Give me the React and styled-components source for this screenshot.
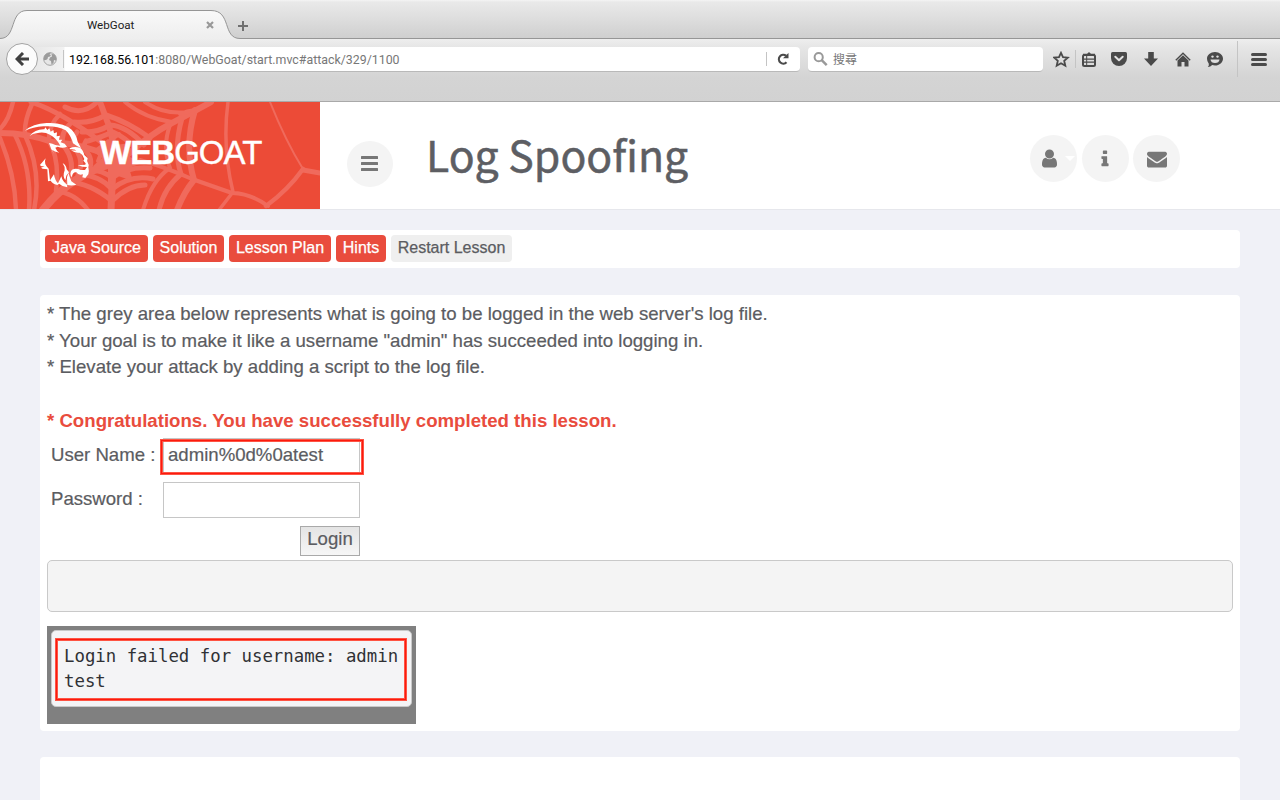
import React from "react";
import styled, { createGlobalStyle } from "styled-components";

const sans = `"Liberation Sans", Arial, sans-serif`;
const ui = `Roboto, "Noto Sans CJK TC", sans-serif`;

const Global = createGlobalStyle`
  * { box-sizing: border-box; }
  html, body, #root { height: 100%; margin: 0; }
  body { overflow: hidden; background: #f0f1f7; font-family: ${sans}; color: #5b5c61; }
  svg { display: block; flex: none; }
`;

const Page = styled.div`
  height: 800px;
  overflow: hidden;
  display: flex;
  flex-direction: column;
`;

/* ---------- browser window ---------- */

const TabStrip = styled.div`
  height: 39px;
  flex: none;
  display: flex;
  position: relative;
  background: linear-gradient(#f4f4f4 0, #e9e9e9 2px, #dedede 18px, #cfcfcf 38px);
`;

const TabOutline = styled.svg`
  position: absolute;
  left: 0;
  top: 0;
`;

const Tab = styled.div`
  position: relative;
  width: 230px;
  height: 39px;
  padding: 11px 16px 0 87px;
  display: flex;
  align-items: center;
  justify-content: space-between;
  font: 11.6px/16px ${ui};
  color: #222;
`;

const NewTab = styled.div`
  position: relative;
  padding: 21px 0 0 8px;
`;

const NavBar = styled.div`
  height: 63px;
  flex: none;
  display: flex;
  align-items: flex-start;
  padding: 4px 12px 0 6px;
  border-bottom: 1px solid #a9a9a9;
  background: linear-gradient(#eeeeee 0, #e6e6e6 8px, #d4d4d4 38px, #d2d2d2 100%);
`;

const BackButton = styled.div`
  width: 32px;
  height: 32px;
  flex: none;
  z-index: 1;
  border: 1px solid #a3a3a3;
  border-radius: 50%;
  background: #fbfbfb;
  display: grid;
  place-items: center;
`;

const AddressField = styled.div`
  width: 776px;
  height: 25px;
  margin: 4px 8px 0 -14px;
  padding-left: 19px;
  display: flex;
  align-items: center;
  background: linear-gradient(90deg, #e4e4e4 0, #f2f2f2 40px, #fff 41px);
  border-bottom: 1px solid #b9b9b9;
  border-radius: 0 4px 4px 0;
  font: 12.37px/22px ${ui};
  color: #777;
`;

const Rule = styled.i`
  width: 1px;
  height: ${(p) => p.$h}px;
  margin: ${(p) => p.$m || "0"};
  background: #c4c4c4;
  flex: none;
`;

const Url = styled.span`
  flex: 1;
  padding-top: 2px;
  white-space: nowrap;
  b { font-weight: 400; color: #000; }
`;

const SearchField = styled.div`
  width: 235px;
  height: 25px;
  margin-top: 4px;
  padding-left: 5px;
  display: flex;
  align-items: center;
  gap: 5px;
  background: #fff;
  border-bottom: 1px solid #b9b9b9;
  border-radius: 4px;
  font: 12px/24px "Noto Sans CJK TC", sans-serif;
  color: #777;
`;

const ToolIcons = styled.div`
  flex: 1;
  height: 32px;
  margin-left: 9px;
  display: flex;
  align-items: center;
`;

const ToolIcon = styled.span`
  width: 18px;
  margin-right: ${(p) => p.$gap}px;
  display: grid;
  place-items: center;
  flex: none;
`;

/* ---------- page header ---------- */

const Header = styled.header`
  height: 108px;
  flex: none;
  display: flex;
  background: #fff;
  border-bottom: 1px solid #e6e7ec;
`;

const Brand = styled.div`
  width: 320px;
  height: 107px;
  position: relative;
  background: #ec4b37;
  overflow: hidden;
`;

const BrandArt = styled.svg`
  position: absolute;
  inset: 0;
`;

const BrandName = styled.div`
  position: relative;
  padding: 31px 0 0 100px;
  font-size: 33px;
  line-height: 40px;
  letter-spacing: -0.95px;
  color: #fff;
  white-space: nowrap;
  -webkit-text-stroke: 0.4px #fff;
  b { font-weight: 700; }
`;

const RoundButton = styled.div`
  width: 47px;
  height: 47px;
  border-radius: 50%;
  background: #f4f4f4;
  display: flex;
  align-items: center;
  justify-content: center;
  flex: none;
`;

const MenuButton = styled(RoundButton)`
  width: 46px;
  height: 46px;
  margin: 39px 0 0 27px;
  padding: 0 1px 1px 0;
`;

const Title = styled.h1`
  flex: 1;
  margin: 19px 0 0 33px;
  font: 400 42.8px/64px "Noto Sans CJK SC", sans-serif;
  color: #5d5e63;
  white-space: nowrap;
  -webkit-text-stroke: 0.5px #5d5e63;
`;

const HeaderActions = styled.div`
  display: flex;
  gap: 4.5px;
  margin: 33px 100px 0 0;
`;

const Caret = styled.i`
  border: 5px solid transparent;
  border-top-color: #fff;
  border-bottom: 0;
  margin: 0 -6px 0 5px;
`;

/* ---------- lesson ---------- */

const Main = styled.main`
  padding: 20px 40px 0;
  display: flex;
  flex-direction: column;
`;

const Panel = styled.section`
  background: #fff;
  border-radius: 4px;
  height: ${(p) => p.$h}px;
  margin-bottom: ${(p) => p.$gap || 0}px;
  padding: ${(p) => p.$pad || "0"};
  flex: none;
`;

const Buttons = styled.div`
  display: flex;
  gap: 5px;
`;

const Button = styled.div`
  width: ${(p) => p.$w}px;
  height: 27px;
  border-radius: 4px;
  background: ${(p) => (p.$plain ? "#efefef" : "#e94c3d")};
  color: ${(p) => (p.$plain ? "#5b5c61" : "#fff")};
  font-size: 16px;
  line-height: 25px;
  text-align: center;
  white-space: nowrap;
  -webkit-text-stroke: 0.25px currentColor;
`;

const Line = styled.p`
  margin: 0;
  height: 26.7px;
  font-size: 18.64px;
  line-height: 26.7px;
  white-space: nowrap;
  -webkit-text-stroke: 0.2px currentColor;
`;

const Success = styled(Line)`
  margin-top: 26.7px;
  font-weight: 700;
  color: #e94c3d;
  -webkit-text-stroke: 0;
`;

const Form = styled.div`
  width: 313px;
  padding: 4px 0 0 4px;
  display: grid;
  grid-template-columns: 112px 197px;
  row-gap: 8px;
  font-size: 18.6px;
  -webkit-text-stroke: 0.2px currentColor;
`;

const Label = styled.span`
  line-height: 33px;
  white-space: nowrap;
`;

const Field = styled.div`
  position: relative;
  height: 36px;
  padding-left: 4px;
  border: 1px solid #c6c6c6;
  background: #fff;
  line-height: 32px;
`;

/* bright centre line with a softer line on either side */
const Highlight = styled.span`
  position: absolute;
  inset: ${(p) => p.$inset};
  border: 1px solid #fb1a0e;
  box-shadow: 0 0 0 1px #fe5444, inset 0 0 0 1px #fe5444;
`;

const LoginButton = styled.div`
  grid-column: 2;
  justify-self: end;
  width: 60px;
  height: 30px;
  border: 1px solid #a9a9a9;
  background: linear-gradient(#e4e4e4, #f6f6f6);
  line-height: 24px;
  text-align: center;
`;

const EmptyWell = styled.div`
  height: 52px;
  margin-top: 4px;
  border: 1px solid #c9c9c9;
  border-radius: 5px;
  background: #f4f4f4;
`;

const LogArea = styled.div`
  width: 369px;
  height: 98px;
  margin-top: 14px;
  padding: 4px;
  background: #808080;
`;

const Log = styled.pre`
  position: relative;
  height: 77px;
  margin: 0;
  padding: 13px 12px;
  border: 1px solid #c9c9c9;
  border-radius: 5px;
  background: #f4f4f6;
  color: #303135;
  font: 17.35px/25px "DejaVu Sans Mono", monospace;
`;

/* ---------- drawings ---------- */

const dark = "#4a4a4a";

const TabShape = () => (
  <TabOutline width="1280" height="39" viewBox="0 0 1280 39">
    <defs>
      <linearGradient id="tab" x1="0" y1="0" x2="0" y2="1">
        <stop offset="0" stopColor="#f9f9f9" />
        <stop offset="1" stopColor="#eeeeee" />
      </linearGradient>
    </defs>
    <path d="M0 38.5C17 38.5 9 10.5 27 10.5H211C232 10.5 222 38.5 240 38.5V39H0Z" fill="url(#tab)" />
    <path d="M0 38.5C17 38.5 9 10.5 27 10.5H211C232 10.5 222 38.5 240 38.5H1280" fill="none" stroke="#969696" />
  </TabOutline>
);

const CloseIcon = () => (
  <svg width="8" height="8" viewBox="0 0 8 8">
    <path d="M1 1l6 6M7 1L1 7" stroke="#999" strokeWidth="2.2" />
  </svg>
);

const PlusIcon = () => (
  <svg width="10" height="10" viewBox="0 0 10 10">
    <path d="M5 0v10M0 5h10" stroke="#707070" strokeWidth="2" />
  </svg>
);

const BackIcon = () => (
  <svg width="14" height="14" viewBox="0 0 14 14">
    <path d="M8 1L2 7l6 6M2 7h12" fill="none" stroke="#404040" strokeWidth="3" />
  </svg>
);

const GlobeIcon = () => (
  <svg width="14" height="14" viewBox="0 0 14 14">
    <circle cx="7" cy="7" r="6.3" fill="#e6e6e6" stroke="#a2a2a2" />
    <path d="M1 8C0 3 4 0 8 .8L6.500 2.500l1.500.5-1 1.500-2 .5L4.500 7 3 8zM8.500 2l2.500.2c2 1.500 2.700 4 2.200 6.300l-2.200-.5-.5 3-2 1.500-.5-3.500L6 8l1-2.500L9 4.500z" fill="#9b9b9b" />
  </svg>
);

const ReloadIcon = () => (
  <svg width="12" height="12" viewBox="0 0 12 12">
    <path d="M9.500 9.200A4.400 4.400 0 1 1 9 2.700" fill="none" stroke={dark} strokeWidth="2.200" />
    <path d="M11.500 0v5.200H6z" fill={dark} />
  </svg>
);

const SearchIcon = () => (
  <svg width="15" height="14" viewBox="0 0 15 14">
    <circle cx="5.700" cy="5.200" r="4.100" fill="none" stroke="#999" strokeWidth="2" />
    <path d="M8.700 8.200l5 5" stroke="#999" strokeWidth="2.400" />
  </svg>
);

const StarIcon = () => (
  <svg width="17" height="17" viewBox="0 0 17 17">
    <path d="M8 1.800l2 4.300 4.800.5-3.600 3.200 1.100 4.900L8 12.200l-4.300 2.500 1.100-4.900-3.600-3.200 4.800-.5z" fill="none" stroke={dark} strokeWidth="1.800" />
  </svg>
);

const ListIcon = () => (
  <svg width="14" height="15" viewBox="0 0 14 15">
    <path d="M4.500 2.500L7 0l2.500 2.500" fill={dark} />
    <rect x="1" y="3" width="12" height="11" rx="1.500" fill="none" stroke={dark} strokeWidth="2" />
    <path d="M1 2.500h12M2 7.200h10M2 10.200h10" stroke={dark} strokeWidth="1.300" />
    <path d="M4.700 4v10" stroke={dark} strokeWidth="1" />
  </svg>
);

const PocketIcon = () => (
  <svg width="16" height="14" viewBox="0 0 16 14">
    <path d="M1.500 0h13Q16 0 16 1.500V6a8 8 0 0 1-16 0V1.500Q0 0 1.500 0z" fill={dark} />
    <path d="M4.300 4.700L8 8.200l3.700-3.500" fill="none" stroke="#e2e2e2" strokeWidth="2" strokeLinecap="round" strokeLinejoin="round" />
  </svg>
);

const DownloadIcon = () => (
  <svg width="14" height="14" viewBox="0 0 14 14">
    <path d="M4.200 0h5.600v6.500H14L7 14 0 6.500h4.200z" fill={dark} />
  </svg>
);

const HomeIcon = () => (
  <svg width="16" height="15" viewBox="0 0 16 15">
    <path d="M.8 8.200L8 1.300l7.200 6.900" fill="none" stroke={dark} strokeWidth="1.400" />
    <path d="M2.500 8.500L8 3.300l5.500 5.200V14.500h-4V10h-3v4.500h-4z" fill={dark} />
  </svg>
);

const ChatIcon = () => (
  <svg width="16" height="15" viewBox="0 0 16 15">
    <path d="M8 0c4.500 0 8 3 8 6.700s-3.500 6.800-8 6.800q-1.500 0-2.800-.4Q3.500 15 .8 15q1.500-1.500 1-3.300Q0 9.500 0 6.700C0 3 3.500 0 8 0z" fill={dark} />
    <path d="M3.500 7.500h9Q12 11 8 11T3.500 7.500z" fill="#dedede" />
    <circle cx="5.500" cy="4.600" r="1.200" fill="#dedede" />
    <circle cx="10.500" cy="4.600" r="1.200" fill="#dedede" />
  </svg>
);

const BarsIcon = ({ w, h, color, t, r }) => (
  <svg width={w} height={h}>
    <rect width={w} height={t} rx={r} fill={color} />
    <rect y={(h - t) / 2} width={w} height={t} rx={r} fill={color} />
    <rect y={h - t} width={w} height={t} rx={r} fill={color} />
  </svg>
);

const Glyph = ({ d, size }) => (
  <svg width={size} height={size} viewBox="0 0 1792 1792">
    <path d={d} fill="#777" />
  </svg>
);

const userPath =
  "M1536 1399q0 109-62.5 187t-150.5 78h-854q-88 0-150.5-78t-62.5-187q0-85 8.5-160.5t31.5-152 58.5-131 94-89 134.5-34.5q131 128 313 128t313-128q76 0 134.5 34.5t94 89 58.5 131 31.5 152 8.5 160.5zm-256-887q0 159-112.5 271.5t-271.5 112.5-271.5-112.5-112.5-271.5 112.5-271.5 271.5-112.5 271.5 112.5 112.5 271.5z";
const infoPath =
  "M1216 1344v128q0 26-19 45t-45 19h-512q-26 0-45-19t-19-45v-128q0-26 19-45t45-19h64v-384h-64q-26 0-45-19t-19-45v-128q0-26 19-45t45-19h384q26 0 45 19t19 45v576h64q26 0 45 19t19 45zm-128-1152v192q0 26-19 45t-45 19h-256q-26 0-45-19t-19-45v-192q0-26 19-45t45-19h256q26 0 45 19t19 45z";
const mailPath =
  "M1792 710v794q0 66-47 113t-113 47h-1472q-66 0-113-47t-47-113v-794q44 49 101 87 362 246 497 345 57 42 92.5 65.5t94.5 48 110 24.5h2q51 0 110-24.5t94.5-48 92.5-65.5q170-123 498-345 57-39 100-87zm0-294q0 79-49 151t-122 123q-376 261-468 325-10 7-42.5 31t-54 38.5-52 32.5-57.5 27-50 9h-2q-23 0-50-9t-57.5-27-52-32.5-54-38.5-42.5-31q-91-64-262-182.5t-205-142.5q-62-42-117-115.5t-55-136.5q0-78 41.5-130t118.5-52h1472q65 0 112.5 47t47.500 113z";

const WebAndGoat = () => (
  <BrandArt width="320" height="108" viewBox="0 0 320 108">
    <g fill="none" stroke="#f06a5c" strokeLinecap="round" strokeLinejoin="round">
      {/* outer threads */}
      <path d="M270 0Q286 40 303 67" strokeWidth="2" />
      <path d="M303 68L320 71" strokeWidth="5" />
      <path d="M303 67Q288 88 266 104" strokeWidth="4.500" />
      <path d="M268 104Q250 91 232 91Q212 84 192 77Q165 65 140 58" strokeWidth="4" />
      <path d="M228 0Q222 45 233 90L219 108" strokeWidth="3.500" />
      <path d="M195 8Q184 44 194 78Q184 90 177 108" strokeWidth="6" />
      <path d="M182 16Q173 48 181 72Q164 86 159 108" strokeWidth="5" />
      <path d="M170 23Q162 45 170 66Q152 78 143 108" strokeWidth="4" />
      {/* spokes */}
      <path d="M211 0Q191 11 172 21Q148 33 123 57" strokeWidth="6" />
      <path d="M100 0L109 24 118 60" strokeWidth="6" />
      <path d="M31 0Q67 12 115 51" strokeWidth="5" />
      <path d="M0 31Q28 31 52 40Q85 42 114 56" strokeWidth="6" />
      <path d="M43 108Q68 75 113 61" strokeWidth="8" />
      <path d="M111 108L113 63" strokeWidth="7" />
      {/* rings */}
      <path d="M13 0Q9 18 0 27M32 2Q24 19 25 33Q42 70 34 108M0 36Q15 72 16 108M15 33Q32 67 29 108M60 12Q48 24 49 39Q60 58 56 89Q75 91 88 108" strokeWidth="4.500" />
      <path d="M65 5Q82 14 96 1M74 20Q90 22 106 13Q128 20 150 36M82 30Q97 31 110 23Q127 24 144 43M88 39Q102 35 113 30Q125 35 137 48" strokeWidth="5" />
      <path d="M70 22Q60 31 63 43Q77 60 68 80Q90 81 112 99Q128 83 145 83M77 30Q71 38 74 45Q85 58 78 73Q98 72 112 87Q131 72 153 77M86 39Q83 44 85 48Q94 57 89 68Q103 68 112 76Q128 64 150 66" strokeWidth="5" />
      <path d="M125 0Q144 16 172 20M145 0Q164 13 188 10M180 12Q187 9 195 8" strokeWidth="4" />
      <path d="M119 32Q103 42 98 59M130 42Q115 52 113 75" strokeWidth="4" />
    </g>
    <path d="M92 49L108 37 116 43 130 41 128 54 142 61 129 66 133 79 118 74 108 82 108 64 93 64 102 56z" fill="#f06a5c" />
    {/* goat head */}
    <g transform="translate(15 11) scale(.33333)" fill="#fff">
      <path d="M30 53Q53 32 95 30Q145 27 170 50Q185 66 188 86L198 105Q184 99 174 91Q168 68 152 52Q125 37 85 40Q54 42 30 53Z" />
      <path d="M44 69Q60 48 88 49L91 43 97 51 103 46 107 56 115 51 117 61 126 58 125 70 135 68 132 80 142 80 137 88 149 92 156 101Q143 107 128 101L121 104Q124 113 133 119Q118 116 111 110L118 124Q108 111 102 90Q113 91 121 96L136 98Q124 75 105 65Q85 54 65 61Q53 62 44 69Z" />
      <path d="M164 106Q177 99 195 104Q204 110 208 126L218 136Q215 145 219 151Q223 156 220 163Q223 174 220 184L211 195 202 193 204 184Q190 188 184 178Q173 176 170 193Q162 181 171 170Q183 164 197 171L210 171 216 162 203 161 188 157 211 155 212 151 205 143 208 138 202 126 194 119Q179 121 168 112L184 113Q180 108 164 109Z" />
      <path d="M92 136Q85 153 101 167L105 202 117 184Q120 203 129 211L139 190Q142 205 157 216L156 193 160 180 169 205 184 215Q173 219 156 216L157 223Q141 220 132 212L127 216Q111 211 107 203L99 205 97 169 83 167 78 164 89 160Q67 160 80 150Z" />
      <path d="M143 151Q153 155 155 169L162 178 154 188 151 202Q142 190 149 172Q151 162 143 151Z" />
    </g>
  </BrandArt>
);

const tools = [
  [PocketIcon, 14],
  [DownloadIcon, 14],
  [HomeIcon, 14],
  [ChatIcon, 13],
];

const lessonButtons = [
  ["Java Source", 103],
  ["Solution", 71],
  ["Lesson Plan", 102],
  ["Hints", 50],
];

export default function App() {
  return (
    <Page>
      <Global />
      <TabStrip>
        <TabShape />
        <Tab>
          WebGoat
          <CloseIcon />
        </Tab>
        <NewTab><PlusIcon /></NewTab>
      </TabStrip>
      <NavBar>
        <BackButton><BackIcon /></BackButton>
        <AddressField>
          <GlobeIcon />
          <Rule $h={18} $m="0 5px 0 6px" />
          <Url><b>192.168.56.101</b>:8080/WebGoat/start.mvc#attack/329/1100</Url>
          <Rule $h={14} $m="0 10px 0 0" />
          <ReloadIcon />
          <Rule $h={0} $m="0 10px 0 0" />
        </AddressField>
        <SearchField>
          <SearchIcon />
          搜尋
        </SearchField>
        <ToolIcons>
          <ToolIcon $gap={5}><StarIcon /></ToolIcon>
          <Rule $h={18} $m="0 4px 0 0" />
          <ToolIcon $gap={12}><ListIcon /></ToolIcon>
          {tools.map(([Icon, gap], i) => (
            <ToolIcon key={i} $gap={gap}><Icon /></ToolIcon>
          ))}
          <Rule $h={36} $m="0 13px 0 0" />
          <BarsIcon w={16} h={13} t={3} r={1.5} color={dark} />
        </ToolIcons>
      </NavBar>

      <Header>
        <Brand>
          <WebAndGoat />
          <BrandName><b>WEB</b>GOAT</BrandName>
        </Brand>
        <MenuButton><BarsIcon w={17} h={15} t={3} r={0.5} color="#777" /></MenuButton>
        <Title>Log Spoofing</Title>
        <HeaderActions>
          <RoundButton><Glyph d={userPath} size={21} /><Caret /></RoundButton>
          <RoundButton><Glyph d={infoPath} size={20} /></RoundButton>
          <RoundButton><Glyph d={mailPath} size={20} /></RoundButton>
        </HeaderActions>
      </Header>

      <Main>
        <Panel $h={38} $gap={27} $pad="5px">
          <Buttons>
            {lessonButtons.map(([text, w]) => (
              <Button key={text} $w={w}>{text}</Button>
            ))}
            <Button $w={121} $plain>Restart Lesson</Button>
          </Buttons>
        </Panel>
        <Panel $h={436} $gap={26} $pad="6px 7px 0">
          <Line>* The grey area below represents what is going to be logged in the web server's log file.</Line>
          <Line>* Your goal is to make it like a username "admin" has succeeded into logging in.</Line>
          <Line>* Elevate your attack by adding a script to the log file.</Line>
          <Success>* Congratulations. You have successfully completed this lesson.</Success>
          <Form>
            <Label>User Name :</Label>
            <Field>
              admin%0d%0atest
              <Highlight $inset="1px -4px -1px -3px" />
            </Field>
            <Label>Password :</Label>
            <Field />
            <LoginButton>Login</LoginButton>
          </Form>
          <EmptyWell />
          <LogArea>
            <Log>
              {"Login failed for username: admin\ntest"}
              <Highlight $inset="8px 5px 6px 4px" />
            </Log>
          </LogArea>
        </Panel>
        <Panel $h={60} />
      </Main>
    </Page>
  );
}
